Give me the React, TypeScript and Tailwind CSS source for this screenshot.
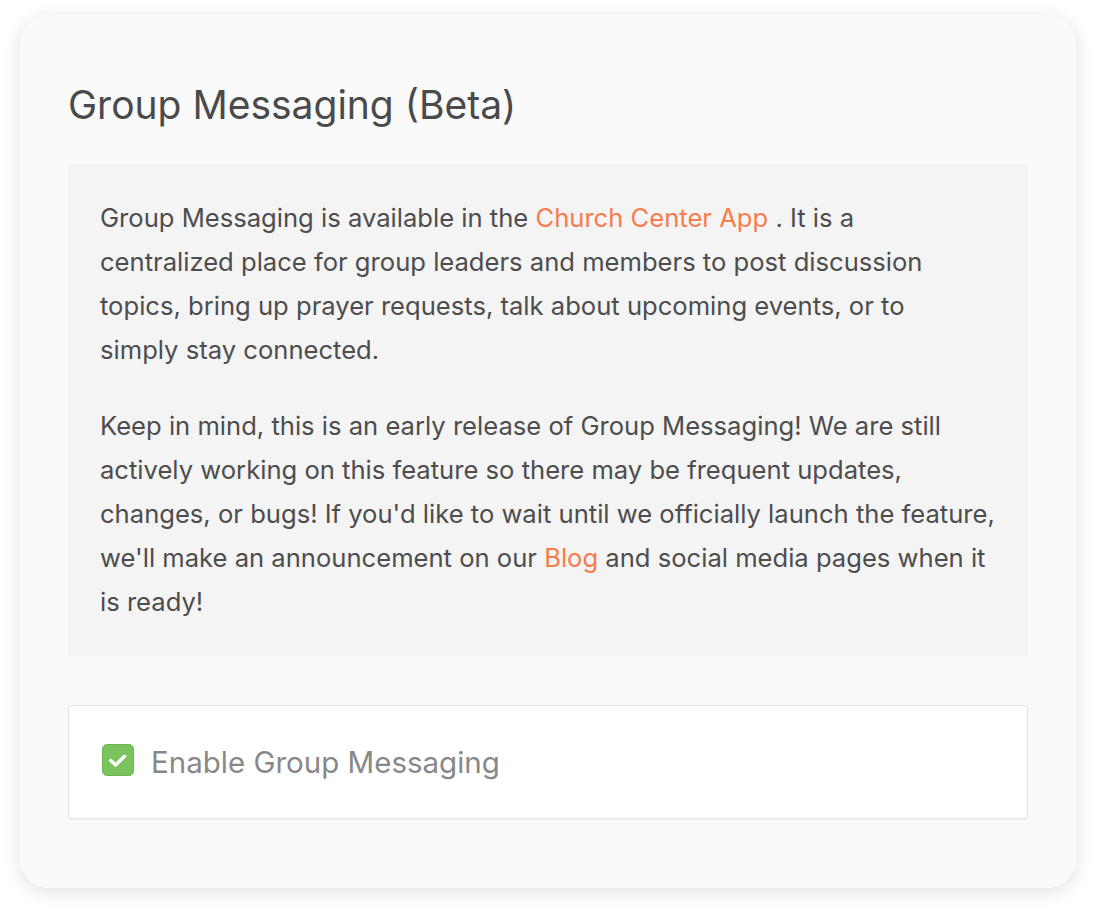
import React from "react";

export default function App() {
  return (
    <div
      className="w-[1096px] h-[916px] bg-white pt-[14px] pl-[20px]"
      style={{ fontFamily: "Inter, 'Noto Sans', sans-serif" }}
    >
      <div className="w-[1056px] h-[874px] rounded-[28px] bg-[#fafafa] shadow-[0_4px_18px_rgba(0,0,0,0.12)] px-[48px] pt-[68px]">
        <h1 className="text-[39px] leading-[46px] text-[#4a4a4a] font-normal">
          Group Messaging (Beta)
        </h1>
        <div className="mt-[36px] bg-[#f4f4f4] pl-[32px] pr-[16px] pt-[32px] pb-[32px] text-[25.6px] leading-[44px] text-[#4d4d4d] whitespace-nowrap">
          <p>
            Group Messaging is available in the{" "}
            <span className="text-[#f77c4d]">Church Center App</span> . It is a
            <br />
            centralized place for group leaders and members to post discussion
            <br />
            topics, bring up prayer requests, talk about upcoming events, or to
            <br />
            simply stay connected.
          </p>
          <p className="mt-[32px]">
            Keep in mind, this is an early release of Group Messaging! We are still
            <br />
            actively working on this feature so there may be frequent updates,
            <br />
            changes, or bugs! If you'd like to wait until we officially launch the feature,
            <br />
            we'll make an announcement on our{" "}
            <span className="text-[#f77c4d]">Blog</span> and social media pages
            when it
            <br />
            is ready!
          </p>
        </div>
        <div className="mt-[49px] h-[114px] bg-white border border-[#e3e3e3] rounded-[3px] shadow-[0_1px_2px_rgba(0,0,0,0.05)] flex items-center pl-[33px]">
          <div className="w-[32px] h-[32px] -mt-[4px] rounded-[5px] bg-[#7bc35f] border border-[#6fb654] relative">
            <svg
              className="absolute -left-px -top-px"
              width="32"
              height="32"
              viewBox="0 0 32 32"
              fill="none"
            >
              <path
                d="M8.8 16.6 L13.6 21 L22.6 12.2"
                stroke="white"
                strokeWidth="3.4"
                strokeLinecap="round"
                strokeLinejoin="round"
              />
            </svg>
          </div>
          <span className="ml-[17px] text-[29.5px] text-[#888888]">
            Enable Group Messaging
          </span>
        </div>
      </div>
    </div>
  );
}
